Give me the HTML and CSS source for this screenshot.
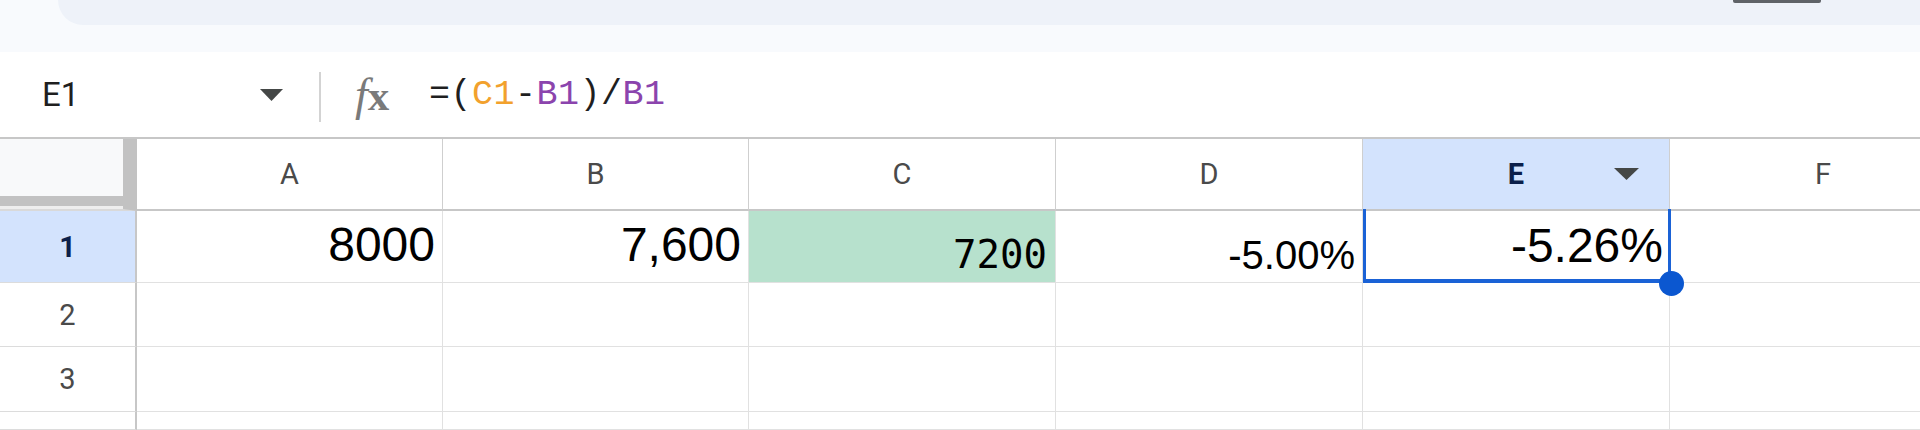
FILE: index.html
```html
<!DOCTYPE html>
<html>
<head>
<meta charset="utf-8">
<link rel="stylesheet" href="styles.css">
</head>
<body>
<div class="top">
  <div class="toolbar"><span class="tb-handle"></span></div>
</div>
<div class="fbar">
  <div class="namebox">
    <span class="name">E1</span>
    <svg class="nb-arrow" width="23" height="12" viewBox="0 0 23 12"><polygon points="0,0 23,0 11.5,12" fill="#444746"/></svg>
  </div>
  <div class="divider"></div>
  <span class="fx"><span class="fx-f">f</span><span class="fx-x">x</span></span>
  <div class="formula">=(<span class="ref1">C1</span>-<span class="ref2">B1</span>)/<span class="ref2">B1</span></div>
</div>
<div class="grid">
  <div class="corner"><div class="corner-fill"></div><div class="corner-bar"></div><div class="corner-gap"></div></div>
  <div class="colh">A</div>
  <div class="colh">B</div>
  <div class="colh">C</div>
  <div class="colh">D</div>
  <div class="colh sel">E<svg class="colh-arrow" width="25" height="12" viewBox="0 0 25 12"><polygon points="0,0 25,0 12.5,12" fill="#444746"/></svg></div>
  <div class="colh last">F</div>

  <div class="rowh sel">1</div>
  <div class="cell num">8000</div>
  <div class="cell num">7,600</div>
  <div class="cell mono green">7200</div>
  <div class="cell pct">-5.00%</div>
  <div class="cell num e1">-5.26%<div class="selection"></div><div class="handle"></div></div>
  <div class="cell last"></div>

  <div class="rowh">2</div>
  <div class="cell"></div><div class="cell"></div><div class="cell"></div><div class="cell"></div><div class="cell"></div><div class="cell last"></div>

  <div class="rowh">3</div>
  <div class="cell"></div><div class="cell"></div><div class="cell"></div><div class="cell"></div><div class="cell"></div><div class="cell last"></div>

  <div class="rowh"></div>
  <div class="cell"></div><div class="cell"></div><div class="cell"></div><div class="cell"></div><div class="cell"></div><div class="cell last"></div>
</div>
</body>
</html>
```
FILE: styles.css
```css
* { box-sizing: border-box; }
html, body { margin: 0; padding: 0; }
body {
  width: 1920px;
  height: 430px;
  overflow: hidden;
  background: #ffffff;
  font-family: Roboto, "Liberation Sans", Arial, sans-serif;
}

.top {
  height: 52px;
  background: #f8fafd;
}
.toolbar {
  margin-left: 58px;
  height: 25px;
  background: #eef2f9;
  border-bottom-left-radius: 25px;
  display: flex;
}
.tb-handle {
  margin-left: auto;
  margin-right: 99px;
  width: 88px;
  height: 3px;
  background: #5f6368;
  border-radius: 0 0 2px 2px;
}

.fbar {
  height: 85px;
  display: flex;
  align-items: center;
  background: #ffffff;
}
.namebox {
  width: 319px;
  display: flex;
  align-items: center;
  padding-left: 42px;
}
.name {
  font-family: Roboto, "Liberation Sans", sans-serif;
  font-size: 33px;
  color: #1f1f1f;
  line-height: 1;
}
.nb-arrow {
  margin-left: auto;
  margin-right: 36px;
}
.divider {
  width: 2px;
  height: 50px;
  background: #d3d3d3;
  margin-top: 4px;
}
.fx {
  margin-left: 34px;
  width: 44px;
  display: flex;
  align-items: baseline;
  font-family: "Liberation Serif", "Times New Roman", serif;
  color: #7a7a7a;
  line-height: 1;
}
.fx-f {
  font-style: italic;
  font-size: 46px;
}
.fx-x {
  font-size: 43px;
  font-weight: bold;
  margin-left: 0;
}
.formula {
  margin-left: 30px;
  font-family: "Liberation Mono", "DejaVu Sans Mono", monospace;
  font-size: 35px;
  letter-spacing: 0.5px;
  color: #1f1f1f;
  line-height: 1;
  margin-top: 2px;
}
.ref1 { color: #f2a12d; }
.ref2 { color: #8b44ad; }

.grid {
  display: grid;
  width: 1977px;
  grid-template-columns: 137px 306px 306px 307px 307px 307px 307px;
  grid-template-rows: 72px 72px 64px 65px 1fr;
  border-top: 2px solid #c7c7c7;
  height: 293px;
}
.corner {
  display: flex;
  flex-direction: column;
  border-right: 14px solid #c2c2c2;
  border-bottom: 2px solid #d9d9d9;
}
.corner-fill { flex: 1; background: #f8f9fa; }
.corner-bar { height: 10px; background: #c2c2c2; }
.corner-gap { height: 3px; background: #eeeeee; }

.colh {
  position: relative;
  display: flex;
  align-items: center;
  justify-content: center;
  font-size: 29px;
  color: #4a4a4a;
  border-right: 1px solid #cfcfcf;
  border-bottom: 2px solid #c7c7c7;
  background: #ffffff;
}
.colh.sel {
  background: #d3e3fd;
  color: #0b1f4a;
  font-weight: bold;
}
.colh-arrow {
  position: absolute;
  right: 30px;
  top: 29px;
}

.rowh {
  display: flex;
  align-items: center;
  justify-content: center;
  font-size: 29px;
  color: #4a4a4a;
  border-right: 2px solid #c7c7c7;
  border-bottom: 1px solid #dcdcdc;
  background: #ffffff;
}
.rowh.sel {
  background: #d3e3fd;
  color: #0b1f4a;
  font-weight: bold;
}

.cell {
  position: relative;
  border-right: 1px solid #e1e1e1;
  border-bottom: 1px solid #e1e1e1;
  display: flex;
  justify-content: flex-end;
  align-items: flex-end;
  color: #000000;
}
.num {
  font-family: "Liberation Sans", Arial, sans-serif;
  font-size: 48px;
  line-height: 48px;
  padding-right: 7px;
  padding-bottom: 13px;
}
.e1 { padding-right: 6px; padding-bottom: 12px; }
.pct {
  font-family: "Liberation Sans", Arial, sans-serif;
  font-size: 40px;
  line-height: 40px;
  padding-right: 7px;
  padding-bottom: 7px;
}
.mono {
  font-family: "DejaVu Sans Mono", "Liberation Mono", monospace;
  font-size: 39px;
  line-height: 39px;
  padding-right: 8px;
  padding-bottom: 8px;
}
.green { background: #b7e1cd; }

.selection {
  position: absolute;
  left: 0;
  top: -2px;
  right: -2px;
  bottom: -1px;
  border: 3px solid #1a62d6;
  border-top: none;
  border-bottom-width: 4px;
  z-index: 2;
}
.handle {
  position: absolute;
  width: 25px;
  height: 25px;
  border-radius: 50%;
  background: #0b57d0;
  right: -14.5px;
  bottom: -13.5px;
  z-index: 3;
}
```
